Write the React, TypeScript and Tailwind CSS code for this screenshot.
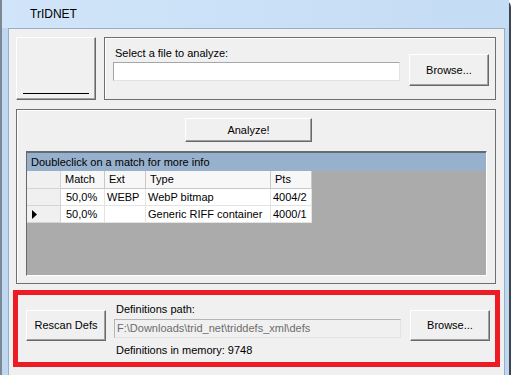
const btn =
  "bg-[#f0f0f0] border border-t-white border-l-white border-r-[#696969] border-b-[#696969] shadow-[inset_-1px_-1px_0_#a0a0a0] flex items-center justify-center text-black";

const cols = [
  { name: "Match", w: "w-[44px]" },
  { name: "Ext", w: "w-[41px]" },
  { name: "Type", w: "w-[125px]" },
  { name: "Pts", w: "w-[41px]" },
];

const rows = [
  { cells: ["50,0%", "WEBP", "WebP bitmap", "4004/2"], current: false },
  { cells: ["50,0%", "", "Generic RIFF container", "4000/1"], current: true },
];

function MatchGrid() {
  return (
    <div className="ml-[9px] mt-[9px] w-[461px] h-[125px] bg-[#ababab] border border-[#696969] border-r-white border-b-white overflow-hidden">
      <div className="h-[19px] bg-[#97b0cc] border-t border-[#5f6d7c] pl-[4px] flex items-center">
        Doubleclick on a match for more info
      </div>
      <div className="flex h-[18px]">
        <div className="w-[34px] bg-[#f0f0f0] border-r border-b border-[#d4d4d4]" />
        {cols.map((c) => (
          <div
            key={c.name}
            className={`${c.w} bg-[#f7f7f7] border-r border-b border-[#c8c8c8] pl-[4px] flex items-center`}
          >
            {c.name}
          </div>
        ))}
      </div>
      {rows.map((r, i) => (
        <div key={i} className="flex h-[17px]">
          <div className="w-[34px] bg-[#f0f0f0] border-r border-b border-[#d4d4d4] flex items-center pl-[5px]">
            {r.current && (
              <svg width="5" height="9" viewBox="0 0 5 9">
                <path d="M0 0 L5 4.5 L0 9 Z" fill="#000" />
              </svg>
            )}
          </div>
          {r.cells.map((t, j) => (
            <div
              key={j}
              className={`${cols[j].w} bg-white border-r border-b border-[#e3e3e3] ${j === 0 ? "pl-[5px]" : "pl-[2px]"} flex items-center whitespace-nowrap overflow-hidden`}
            >
              {t}
            </div>
          ))}
        </div>
      ))}
    </div>
  );
}

export default function App() {
  return (
    <div className="w-[514px] h-[375px] bg-white overflow-hidden font-['Liberation_Sans',Arial,sans-serif] text-[11px] text-black">
      <div className="w-[511px] h-[375px] bg-[#bfd8f1] border-l-2 border-r-2 border-l-[#7d8896] border-r-[#3d4650] rounded-tr-[7px] flex flex-col">
        <div className="h-[28px] shrink-0 pl-[28px] flex items-center text-[12px] bg-gradient-to-r from-[#d0e5f9] to-[#c4dcf4]">
          TrIDNET
        </div>
        <div className="ml-[6px] w-[497px] flex-1 bg-[#f0f0f0] border-t border-l border-r border-[#9aadc2]">
          <div className="flex mt-[8px] ml-[7px] gap-[8px]">
            <div className={`${btn} w-[80px] h-[63px] items-end pb-[5px]`}>
              <div className="w-[66px] h-[1px] bg-black" />
            </div>
            <div className="w-[392px] h-[63px] border border-[#6e6e6e] shadow-[inset_1px_1px_0_#fff] flex items-start">
              <div className="ml-[8px] mt-[9px] flex flex-col">
                <div className="h-[13px] leading-[13px] pl-[2px]">Select a file to analyze:</div>
                <div className="mt-[2px] w-[287px] h-[19px] bg-white border border-[#a6a6a6] border-r-[#e3e3e3] border-b-[#e3e3e3]" />
              </div>
              <button className={`${btn} ml-[9px] mt-[16px] w-[80px] h-[32px]`}>Browse...</button>
            </div>
          </div>

          <div className="ml-[7px] mt-[9px] w-[480px] h-[175px] border border-[#6e6e6e] shadow-[inset_1px_1px_0_#fff] flex flex-col">
            <button className={`${btn} ml-[168px] mt-[8px] w-[127px] h-[24px]`}>Analyze!</button>
            <MatchGrid />
          </div>

          <div className="ml-[4px] mt-[6px] w-[487px] h-[77px] border-[5px] border-[#ed1c24] flex items-start">
            <button className={`${btn} ml-[8px] mt-[15px] w-[80px] h-[31px]`}>Rescan Defs</button>
            <div className="ml-[8px] mt-[8px] flex flex-col">
              <div className="h-[13px] leading-[13px] pl-[2px]">Definitions path:</div>
              <div className="mt-[3px] w-[287px] h-[19px] bg-[#f0f0f0] border border-[#b5b5b5] border-r-[#e3e3e3] border-b-[#e3e3e3] text-[#6d6d6d] pl-[2px] flex items-center whitespace-nowrap overflow-hidden">
                F:\Downloads\trid_net\triddefs_xml\defs
              </div>
              <div className="mt-[6px] h-[13px] leading-[13px] pl-[2px]">Definitions in memory: 9748</div>
            </div>
            <button className={`${btn} ml-[9px] mt-[15px] w-[80px] h-[31px]`}>Browse...</button>
          </div>
        </div>
      </div>
    </div>
  );
}
